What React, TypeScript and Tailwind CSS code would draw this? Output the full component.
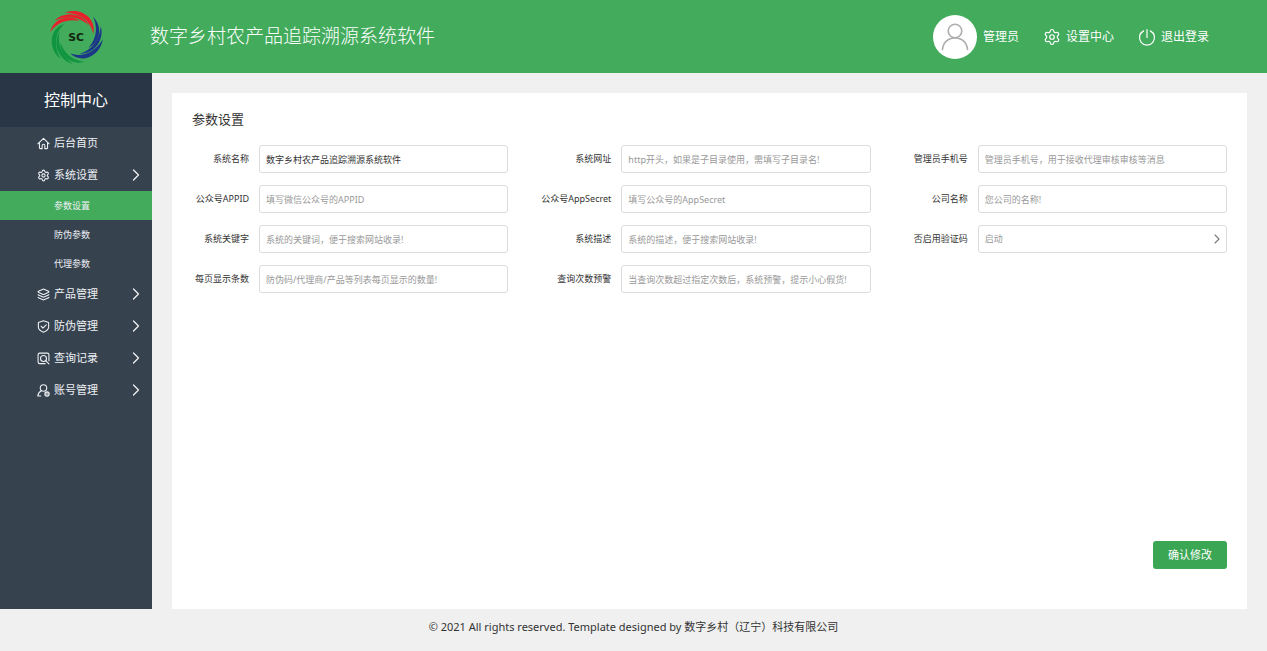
import { useState } from "react";
import { ChevronRight, Layers, Settings } from "lucide-react";

type IconProps = { className?: string };

type FieldDef = {
  id: string;
  label: string;
  placeholder?: string;
  value?: string;
  options?: string[];
};

const fields: FieldDef[] = [
  { id: "siteName", label: "系统名称", value: "数字乡村农产品追踪溯源系统软件" },
  { id: "siteUrl", label: "系统网址", placeholder: "http开头，如果是子目录使用，需填写子目录名!" },
  { id: "phone", label: "管理员手机号", placeholder: "管理员手机号，用于接收代理审核审核等消息" },
  { id: "appId", label: "公众号APPID", placeholder: "填写微信公众号的APPID" },
  { id: "appSecret", label: "公众号AppSecret", placeholder: "填写公众号的AppSecret" },
  { id: "company", label: "公司名称", placeholder: "您公司的名称!" },
  { id: "keywords", label: "系统关键字", placeholder: "系统的关键词，便于搜索网站收录!" },
  { id: "description", label: "系统描述", placeholder: "系统的描述，便于搜索网站收录!" },
  { id: "captcha", label: "否启用验证码", options: ["启动", "关闭"] },
  { id: "pageSize", label: "每页显示条数", placeholder: "防伪码/代理商/产品等列表每页显示的数量!" },
  { id: "queryLimit", label: "查询次数预警", placeholder: "当查询次数超过指定次数后，系统预警，提示小心假货!" },
];

const subItems = ["参数设置", "防伪参数", "代理参数"];

const HomeIcon = ({ className }: IconProps) => (
  <svg viewBox="0 0 24 24" fill="none" stroke="currentColor" strokeWidth="2" strokeLinecap="round" strokeLinejoin="round" className={className}>
    <path d="M1.5 12.5 12 2.5l10.5 10" />
    <path d="M4.5 10.5V20A1.5 1.5 0 0 0 6 21.5h3.5V16a2.5 2.5 0 0 1 5 0v5.5H18a1.5 1.5 0 0 0 1.5-1.5v-9.5" />
  </svg>
);

const ShieldIcon = ({ className }: IconProps) => (
  <svg viewBox="0 0 24 24" fill="none" stroke="currentColor" strokeWidth="2" strokeLinecap="round" strokeLinejoin="round" className={className}>
    <path d="M12 1.5 21.5 4.5V13c0 4.5-4 7.5-9.5 9.5C6.5 20.5 2.5 17.5 2.5 13V4.5Z" />
    <path d="m7.5 11.5 3.5 3.5 6-6" />
  </svg>
);

const RecordIcon = ({ className }: IconProps) => (
  <svg viewBox="0 0 24 24" fill="none" stroke="currentColor" strokeWidth="2" strokeLinecap="round" strokeLinejoin="round" className={className}>
    <path d="M15 21.5H5a3 3 0 0 1-3-3V5a3 3 0 0 1 3-3h14a3 3 0 0 1 3 3v11" />
    <circle cx="12" cy="12" r="5.5" />
    <path d="m16 16 6 6" />
  </svg>
);

const AccountIcon = ({ className }: IconProps) => (
  <svg viewBox="0 0 24 24" fill="none" stroke="currentColor" strokeWidth="2" strokeLinecap="round" strokeLinejoin="round" className={className}>
    <circle cx="12" cy="7.5" r="6" />
    <path d="M1.5 22c.5-4 2.5-7.5 6.500-9.500M1.500 22H7" />
    <circle cx="18.5" cy="18.5" r="4" fill="currentColor" fillOpacity="0.5" />
  </svg>
);

const PowerIcon = ({ className }: IconProps) => (
  <svg viewBox="0 0 24 24" fill="none" stroke="currentColor" strokeWidth="1.6" strokeLinecap="round" className={className}>
    <path d="M12 2v10.500M7.500 3.800a10 10 0 1 0 9 0" />
  </svg>
);

const AvatarIcon = ({ className }: IconProps) => (
  <svg viewBox="0 0 28 28" fill="none" stroke="#aeaeae" strokeWidth="1.6" strokeLinecap="round" className={className}>
    <circle cx="14" cy="8" r="6.8" />
    <path d="M1.5 26.5C2 19.5 7 15 14 15s12 4.5 12.500 11.500" />
  </svg>
);

// each colour is the same set of three streaks, a third of a turn apart
const swirls = [
  { color: "#e8212b", angle: 0 },
  { color: "#1c3688", angle: 120 },
  { color: "#0f9440", angle: 240 },
];

const Logo = ({ className }: IconProps) => (
  <svg viewBox="-80 -80 160 160" role="img" aria-label="SC" className={className}>
    {swirls.map(({ color, angle }) => (
      <g key={color} fill={color} transform={`rotate(${angle})`}>
        <path d="M-34-72C10-90 62-58 51-10C44-46 12-72-34-72Z" />
        <path d="M-64-48C-34-78 18-72 38-34C10-60-26-64-64-48Z" />
        <path d="M-77-14C-66-56-22-68 10-48C-24-54-54-46-77-14Z" />
      </g>
    ))}
    <text
      x="0"
      y="11"
      textAnchor="middle"
      fontSize="32"
      fontWeight="bold"
      fontFamily="DejaVu Sans, sans-serif"
      fill="#14260f"
    >
      SC
    </text>
  </svg>
);

const menuItems = [
  { label: "产品管理", icon: Layers },
  { label: "防伪管理", icon: ShieldIcon },
  { label: "查询记录", icon: RecordIcon },
  { label: "账号管理", icon: AccountIcon },
];

const menuClass = "flex h-8 w-full items-center gap-1 pr-1.5 pl-[37px] text-[11px] text-[#eef1f4]";

function Header() {
  return (
    <header className="flex h-[73px] items-center bg-[#42ab5c] pr-[58px] pl-[49px] text-white">
      <Logo className="size-[54px] shrink-0" />
      <h1 className="ml-[47px] text-[19px] font-light whitespace-nowrap">
        数字乡村农产品追踪溯源系统软件
      </h1>
      <div className="ml-auto flex items-center gap-6 text-xs">
        <a href="#profile" className="flex items-center gap-1.5">
          <span className="flex size-11 items-center justify-center rounded-full bg-white">
            <AvatarIcon className="size-7" />
          </span>
          管理员
        </a>
        <a href="#settings" className="flex items-center gap-[5px]">
          <Settings className="size-[18px]" strokeWidth={1.6} />
          设置中心
        </a>
        <a href="#logout" className="flex items-center gap-[5px]">
          <PowerIcon className="size-[18px]" />
          退出登录
        </a>
      </div>
    </header>
  );
}

function Sidebar() {
  const [open, setOpen] = useState(true);
  const [active, setActive] = useState("参数设置");

  return (
    <aside className="w-[152px] shrink-0 bg-[#37424f]">
      <h2 className="flex h-[54px] items-center justify-center bg-[#283646] text-base text-white">
        控制中心
      </h2>
      <nav>
        <a href="#home" className={menuClass}>
          <HomeIcon className="size-[13px]" />
          后台首页
        </a>
        <button type="button" className={menuClass} onClick={() => setOpen(!open)}>
          <Settings className="size-[13px]" strokeWidth={2} />
          系统设置
          <ChevronRight className="ml-auto size-5" strokeWidth={1.5} />
        </button>
        {open &&
          subItems.map((item) => (
            <a
              key={item}
              href={`#${item}`}
              onClick={() => setActive(item)}
              className={`flex h-[29px] items-center pl-[54px] text-[9px] text-[#eef1f4] ${
                active === item ? "bg-[#42ab5c]" : ""
              }`}
            >
              {item}
            </a>
          ))}
        {menuItems.map(({ label, icon: Icon }) => (
          <button key={label} type="button" className={menuClass}>
            <Icon className="size-[13px]" />
            {label}
            <ChevronRight className="ml-auto size-5" strokeWidth={1.5} />
          </button>
        ))}
      </nav>
    </aside>
  );
}

function Field({ field }: { field: FieldDef }) {
  const control =
    "block h-7 w-full min-w-0 rounded-[3px] border border-[#dcdcdc] bg-white px-1.5 text-[9px] outline-none focus:border-[#42ab5c]";

  return (
    <div className="contents">
      <label htmlFor={field.id} className="text-right text-[9px] whitespace-nowrap text-[#333]">
        {field.label}
      </label>
      {field.options ? (
        <div className="relative">
          <select id={field.id} className={`${control} appearance-none text-[#999]`}>
            {field.options.map((option) => (
              <option key={option}>{option}</option>
            ))}
          </select>
          <ChevronRight
            className="pointer-events-none absolute top-1.5 right-0.5 size-4 text-[#777]"
            strokeWidth={1.6}
          />
        </div>
      ) : (
        <input
          id={field.id}
          type="text"
          defaultValue={field.value}
          placeholder={field.placeholder}
          className={`${control} text-[#333] placeholder:text-[#999]`}
        />
      )}
    </div>
  );
}

export default function App() {
  return (
    <div className="flex min-h-screen flex-col bg-[#f0f0f0] font-['Noto_Sans','Noto_Sans_CJK_SC',sans-serif]">
      <Header />
      <div className="flex flex-1">
        <Sidebar />
        <main className="flex flex-1 flex-col px-5 pt-5">
          <form
            className="flex flex-1 flex-col bg-white px-5 pt-4 pb-10"
            onSubmit={(e) => e.preventDefault()}
          >
            <h3 className="mb-4 text-[13px] leading-5 text-[#333]">参数设置</h3>
            <div className="grid grid-cols-[57px_1fr_93px_1fr_87px_1fr] items-center gap-x-2.5 gap-y-3">
              {fields.map((field) => (
                <Field key={field.id} field={field} />
              ))}
            </div>
            <button
              type="submit"
              className="mt-auto h-7 w-[74px] self-end rounded-[3px] bg-[#3ba755] text-[11px] text-white"
            >
              确认修改
            </button>
          </form>
        </main>
      </div>
      <footer className="flex h-[42px] items-center justify-center pb-1.5 text-[11px] text-[#333]">
        © 2021 All rights reserved. Template designed by 数字乡村（辽宁）科技有限公司
      </footer>
    </div>
  );
}
